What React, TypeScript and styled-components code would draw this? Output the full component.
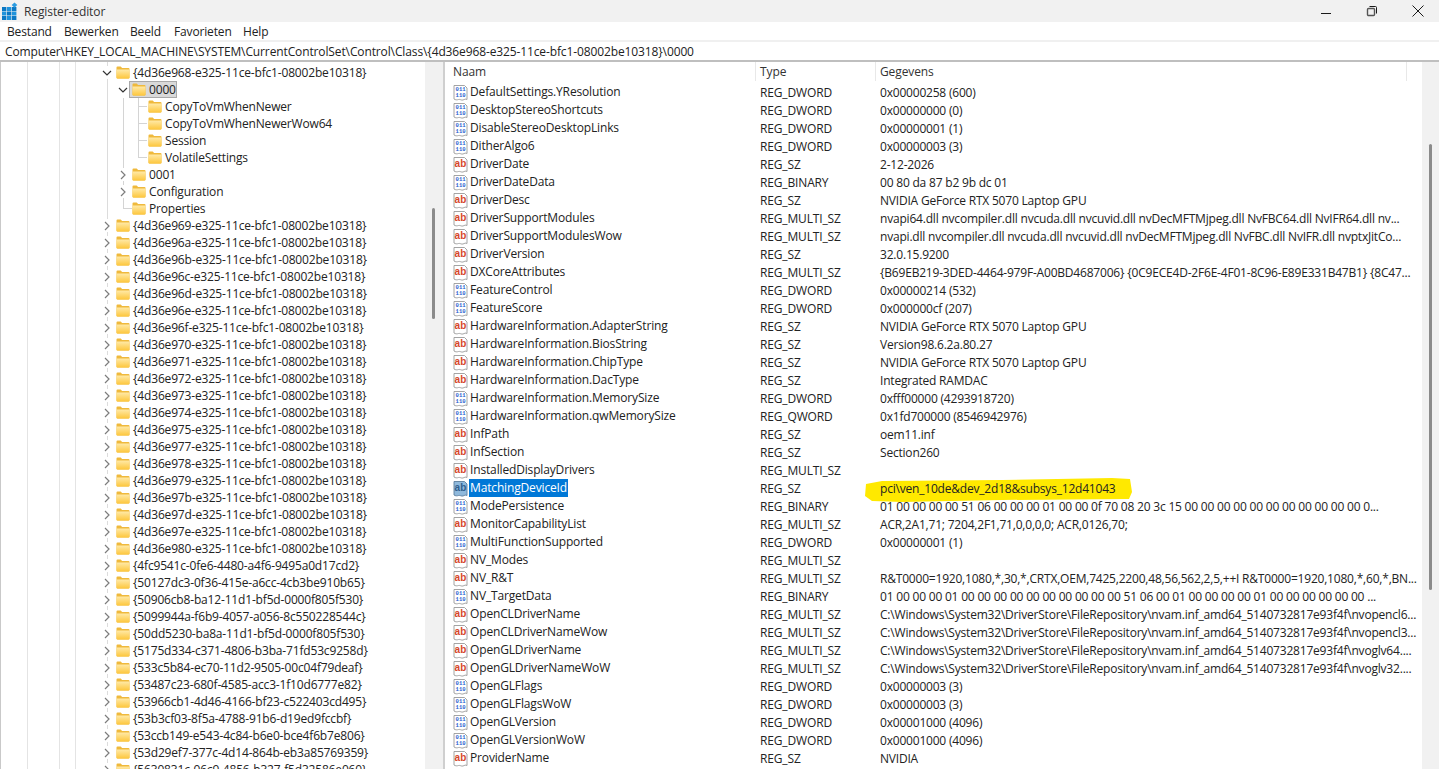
import React from "react";
import styled, { createGlobalStyle } from "styled-components";

const Global = createGlobalStyle`
  html, body { margin: 0; padding: 0; height: 100%; overflow: hidden; background: #fff; }
  #root { height: 100%; }
  * { box-sizing: border-box; }
`;

const FONT = `"Open Sans", "Noto Sans", "Liberation Sans", sans-serif`;

const Window = styled.div`
  height: 769px; width: 1439px; display: flex; flex-direction: column; overflow: hidden;
  font-family: ${FONT}; font-size: 12px; color: #1f1f1f; background: #fff;
`;
const TitleBar = styled.div`
  height: 22px; background: #f1f1f1; display: flex; align-items: center; padding-left: 1px; flex: none;
`;
const TitleText = styled.span`
  margin-left: 5px; color: #333; letter-spacing: -0.1px;
`;
const WindowButtons = styled.div`
  margin-left: auto; display: flex; gap: 30px; padding-right: 13px; align-items: center; height: 100%;
`;
const WindowButton = styled.svg`
  width: 16px; height: 16px; display: block; fill: none; stroke: #1a1a1a; stroke-width: 1;
`;
const MenuBar = styled.div`
  height: 20px; background: #fff; border-bottom: 2px solid #f0f0f0; display: flex; align-items: center; padding-left: 7px; flex: none;
`;
const MenuItem = styled.span<{ $w: number }>`
  width: ${(p) => p.$w}px; color: #222; letter-spacing: -0.15px;
`;
const AddressBar = styled.div`
  height: 20px; border-bottom: 2px solid #bfbfbf; display: flex; align-items: center; padding-left: 5px; flex: none;
  letter-spacing: -0.12px; color: #222;
`;
const Panes = styled.div`
  flex: 1; min-height: 0; display: flex;
`;
const TreePane = styled.div`
  width: 425px; flex: none; padding-top: 2px; overflow: hidden;
  background:
    linear-gradient(#c9c9c9, #c9c9c9) 0 0 / 1px 100% no-repeat,
    linear-gradient(#e4e4e4, #e4e4e4) 27px 0 / 1px 100% no-repeat,
    linear-gradient(#e4e4e4, #e4e4e4) 59px 0 / 1px 100% no-repeat,
    linear-gradient(#e4e4e4, #e4e4e4) 75px 0 / 1px 100% no-repeat,
    linear-gradient(#dcdcdc, #dcdcdc) 107px 0 / 1px 100% no-repeat;
`;
type Bg = { $guides?: number[]; $half?: number; $elbow?: [number, number] };
const rowBg = (p: Bg) => {
  const parts: string[] = [];
  (p.$guides || []).forEach((x) => parts.push(`linear-gradient(#d4d4d4,#d4d4d4) ${x}px 0 / 1px 100% no-repeat`));
  if (p.$half !== undefined) parts.push(`linear-gradient(#d4d4d4,#d4d4d4) ${p.$half}px 0 / 1px 9px no-repeat`);
  if (p.$elbow) parts.push(`linear-gradient(#d4d4d4,#d4d4d4) ${p.$elbow[0]}px 8px / ${p.$elbow[1]}px 1px no-repeat`);
  return parts.length ? parts.join(",") : "none";
};
const TreeRow = styled.div<{ $level: number } & Bg>`
  height: 17px; display: flex; align-items: center; white-space: nowrap;
  padding-left: ${(p) => 99 + (p.$level - 1) * 16}px;
  background: ${rowBg};
`;
const Chevron = styled.span`
  width: 16px; height: 13px; flex: none; background: #fff; display: flex; align-items: center; justify-content: center;
`;
const ChevronGap = styled.span`
  width: 16px; flex: none;
`;
const ChevronIcon = styled.svg<{ $open: boolean }>`
  width: 10px; height: 10px; display: block; fill: none;
  stroke: ${(p) => (p.$open ? "#333" : "#7d7d7d")}; stroke-width: 1.2;
`;
const Entry = styled.span<{ $selected?: boolean }>`
  height: 17px; display: flex; align-items: center; gap: 3px; margin-left: -2px; padding: 0 1px 0 3px;
  background: ${(p) => (p.$selected ? "#d9d9d9" : "transparent")};
  outline: ${(p) => (p.$selected ? "1px solid #a9a9a9" : "none")};
  outline-offset: -1px;
`;
const EntryLabel = styled.span`
  color: #222; letter-spacing: -0.17px;
`;
const FolderSvg = styled.svg`
  width: 14px; height: 13px; display: block; flex: none;
`;
const ScrollTrack = styled.div`
  width: 17px; flex: none; background: #f1f1f1; display: flex; justify-content: center;
`;
const LeftThumb = styled.div`
  width: 3px; height: 111px; margin-top: 146px; background: #8b8b8b; border-radius: 2px;
`;
const RightThumb = styled.div`
  width: 3px; height: 446px; margin-top: 82px; background: #8b8b8b; border-radius: 2px;
`;
const Splitter = styled.div`
  width: 6px; flex: none; background: #fff; border-left: 1px solid #f1f1f1; position: relative;
`;
const SplitterLine = styled.div`
  width: 2px; height: 100%; background: #cfcfcf;
`;
const ListPane = styled.div`
  flex: 1; min-width: 0; display: flex; flex-direction: column; overflow: hidden;
`;
const grid = `display: grid; grid-template-columns: 306px 120px 531px 18px; padding-left: 2px;`;
const ListHeader = styled.div`
  ${grid}; height: 21px; flex: none;
`;
const HeaderCell = styled.div`
  border-right: 1px solid #e8e8e8; padding-left: 3px; height: 19px; display: flex; align-items: center; color: #333; letter-spacing: -0.1px;
`;
const HeaderCellType = styled(HeaderCell)`
  padding-left: 4px;
`;
const ListRow = styled.div`
  ${grid}; height: 18px; flex: none; align-items: center; white-space: nowrap;
`;
const NameCell = styled.div`
  display: flex; align-items: center; padding-left: 3px; gap: 1px; height: 18px;
`;
const NameText = styled.span<{ $selected?: boolean }>`
  height: 18px; line-height: 18px; padding: 0 1px; letter-spacing: -0.15px;
  color: ${(p) => (p.$selected ? "#fff" : "#222")};
  background: ${(p) => (p.$selected ? "#0078d7" : "transparent")};
`;
const TypeCell = styled.div`
  padding-left: 4px; color: #222; letter-spacing: -0.15px;
`;
const DataCell = styled.div`
  padding-left: 4px; color: #222; letter-spacing: -0.2px; position: relative; overflow: visible;
`;
const DataText = styled.span`
  position: relative; z-index: 1;
`;
const Marker = styled.svg`
  position: absolute; left: -11px; top: -2px; width: 268px; height: 25px; display: block;
`;
const ValueSvg = styled.svg`
  width: 15px; height: 17px; display: block; flex: none;
`;
const AbText = styled.text`
  font-family: "Liberation Sans", sans-serif; font-size: 10px; font-weight: 700;
`;
const BinText = styled.text`
  font-family: "Liberation Mono", monospace; font-size: 5.6px; font-weight: 700;
`;

function AppIcon() {
  const cells: React.ReactNode[] = [];
  for (let r = 0; r < 3; r++)
    for (let c = 0; c < 3; c++)
      cells.push(
        <rect key={`${r}${c}`} x={1 + c * 5} y={6 + r * 4.5} width={4.4} height={4} fill={(r + c) % 2 ? "#1f93dc" : "#0b78c4"} />
      );
  return (
    <svg width="18" height="20" viewBox="0 0 18 20" style={{ flex: "none" }}>
      {cells}
      <path d="M13.5 1.5l2.8 2.6-2.8 2.7-2.8-2.7z" fill="#2b9be0" />
    </svg>
  );
}

function Folder() {
  return (
    <FolderSvg viewBox="0 0 14 13">
      <defs>
        <linearGradient id="fg" x1="0" y1="0" x2="0" y2="1">
          <stop offset="0" stopColor="#ffe9a6" />
          <stop offset="1" stopColor="#fdc63b" />
        </linearGradient>
      </defs>
      <path d="M0.5 1.5a1 1 0 0 1 1-1h3.2l1.4 1.6h6.4a1 1 0 0 1 1 1v8.4a1 1 0 0 1-1 1h-11a1 1 0 0 1-1-1z" fill="#efb93c" />
      <path d="M0.5 3.6h13v8a1 1 0 0 1-1 1h-11a1 1 0 0 1-1-1z" fill="url(#fg)" />
    </FolderSvg>
  );
}

function ChevronGlyph({ open }: { open: boolean }) {
  return (
    <ChevronIcon $open={open} viewBox="0 0 10 10">
      {open ? <path d="M1 3l4 4 4-4" /> : <path d="M3 1l4 4-4 4" />}
    </ChevronIcon>
  );
}

function ValueIcon({ kind, selected }: { kind: "ab" | "bin"; selected?: boolean }) {
  return (
    <ValueSvg viewBox="0 0 15 17">
      <path
        d="M1 1.5h10.5l2.5 2.5v11.5c-1.5-1-2.5 0-4 .5s-3-1-4.5-.5-3 .5-4.5-.5z"
        fill={selected ? "#8fb9dc" : "#fff"}
        stroke={selected ? "#5c7f9e" : "#9a9a9a"}
        strokeWidth="0.9"
      />
      {kind === "ab" ? (
        <AbText x="1.6" y="11" fill={selected ? "#2f5f8d" : "#d6472b"}>ab</AbText>
      ) : (
        <>
          <BinText x="2.6" y="7.4" fill="#2b5fd0">011</BinText>
          <BinText x="2.6" y="13" fill="#2b5fd0">110</BinText>
        </>
      )}
    </ValueSvg>
  );
}

type T = { label: string; level: number; chev?: "open" | "closed"; selected?: boolean } & Bg;
const suffix = "-e325-11ce-bfc1-08002be10318}";
const tree: T[] = [
  { label: "{4d36e968" + suffix, level: 1, chev: "open" },
  { label: "0000", level: 2, chev: "open", selected: true },
  { label: "CopyToVmWhenNewer", level: 3, $guides: [123, 138], $elbow: [138, 9] },
  { label: "CopyToVmWhenNewerWow64", level: 3, $guides: [123, 138], $elbow: [138, 9] },
  { label: "Session", level: 3, $guides: [123, 138], $elbow: [138, 9] },
  { label: "VolatileSettings", level: 3, $guides: [123], $half: 138, $elbow: [138, 9] },
  { label: "0001", level: 2, chev: "closed", $guides: [123] },
  { label: "Configuration", level: 2, chev: "closed", $guides: [123] },
  { label: "Properties", level: 2, $half: 123, $elbow: [123, 9] },
  ...["969", "96a", "96b", "96c", "96d", "96e", "96f", "970", "971", "972", "973", "974", "975", "977", "978", "979", "97b", "97d", "97e", "980"].map(
    (k): T => ({ label: `{4d36e${k}${suffix}`, level: 1, chev: "closed" })
  ),
  ...[
    "{4fc9541c-0fe6-4480-a4f6-9495a0d17cd2}",
    "{50127dc3-0f36-415e-a6cc-4cb3be910b65}",
    "{50906cb8-ba12-11d1-bf5d-0000f805f530}",
    "{5099944a-f6b9-4057-a056-8c550228544c}",
    "{50dd5230-ba8a-11d1-bf5d-0000f805f530}",
    "{5175d334-c371-4806-b3ba-71fd53c9258d}",
    "{533c5b84-ec70-11d2-9505-00c04f79deaf}",
    "{53487c23-680f-4585-acc3-1f10d6777e82}",
    "{53966cb1-4d46-4166-bf23-c522403cd495}",
    "{53b3cf03-8f5a-4788-91b6-d19ed9fccbf}",
    "{53ccb149-e543-4c84-b6e0-bce4f6b7e806}",
    "{53d29ef7-377c-4d14-864b-eb3a85769359}",
    "{5630831c-06c9-4856-b327-f5d32586e060}",
  ].map((label): T => ({ label, level: 1, chev: "closed" })),
];

const P = "C:\\Windows\\System32\\DriverStore\\FileRepository\\nvam.inf_amd64_5140732817e93f4f\\";
const GPU = "NVIDIA GeForce RTX 5070 Laptop GPU";
const values: [string, string, string, ("ab" | "bin")][] = [
  ["DefaultSettings.YResolution", "REG_DWORD", "0x00000258 (600)", "bin"],
  ["DesktopStereoShortcuts", "REG_DWORD", "0x00000000 (0)", "bin"],
  ["DisableStereoDesktopLinks", "REG_DWORD", "0x00000001 (1)", "bin"],
  ["DitherAlgo6", "REG_DWORD", "0x00000003 (3)", "bin"],
  ["DriverDate", "REG_SZ", "2-12-2026", "ab"],
  ["DriverDateData", "REG_BINARY", "00 80 da 87 b2 9b dc 01", "bin"],
  ["DriverDesc", "REG_SZ", GPU, "ab"],
  ["DriverSupportModules", "REG_MULTI_SZ", "nvapi64.dll nvcompiler.dll nvcuda.dll nvcuvid.dll nvDecMFTMjpeg.dll NvFBC64.dll NvIFR64.dll nv...", "ab"],
  ["DriverSupportModulesWow", "REG_MULTI_SZ", "nvapi.dll nvcompiler.dll nvcuda.dll nvcuvid.dll nvDecMFTMjpeg.dll NvFBC.dll NvIFR.dll nvptxJitCo...", "ab"],
  ["DriverVersion", "REG_SZ", "32.0.15.9200", "ab"],
  ["DXCoreAttributes", "REG_MULTI_SZ", "{B69EB219-3DED-4464-979F-A00BD4687006} {0C9ECE4D-2F6E-4F01-8C96-E89E331B47B1} {8C47...", "ab"],
  ["FeatureControl", "REG_DWORD", "0x00000214 (532)", "bin"],
  ["FeatureScore", "REG_DWORD", "0x000000cf (207)", "bin"],
  ["HardwareInformation.AdapterString", "REG_SZ", GPU, "ab"],
  ["HardwareInformation.BiosString", "REG_SZ", "Version98.6.2a.80.27", "ab"],
  ["HardwareInformation.ChipType", "REG_SZ", GPU, "ab"],
  ["HardwareInformation.DacType", "REG_SZ", "Integrated RAMDAC", "ab"],
  ["HardwareInformation.MemorySize", "REG_DWORD", "0xfff00000 (4293918720)", "bin"],
  ["HardwareInformation.qwMemorySize", "REG_QWORD", "0x1fd700000 (8546942976)", "bin"],
  ["InfPath", "REG_SZ", "oem11.inf", "ab"],
  ["InfSection", "REG_SZ", "Section260", "ab"],
  ["InstalledDisplayDrivers", "REG_MULTI_SZ", "", "ab"],
  ["MatchingDeviceId", "REG_SZ", "pci\\ven_10de&dev_2d18&subsys_12d41043", "ab"],
  ["ModePersistence", "REG_BINARY", "01 00 00 00 00 51 06 00 00 00 01 00 00 0f 70 08 20 3c 15 00 00 00 00 00 00 00 00 00 00 00 0...", "bin"],
  ["MonitorCapabilityList", "REG_MULTI_SZ", "ACR,2A1,71; 7204,2F1,71,0,0,0,0; ACR,0126,70;", "ab"],
  ["MultiFunctionSupported", "REG_DWORD", "0x00000001 (1)", "bin"],
  ["NV_Modes", "REG_MULTI_SZ", "", "ab"],
  ["NV_R&T", "REG_MULTI_SZ", "R&T0000=1920,1080,*,30,*,CRTX,OEM,7425,2200,48,56,562,2,5,++I R&T0000=1920,1080,*,60,*,BN...", "ab"],
  ["NV_TargetData", "REG_BINARY", "01 00 00 00 01 00 00 00 00 00 00 00 00 00 00 51 06 00 01 00 00 00 00 01 00 00 00 00 00 00 ...", "bin"],
  ["OpenCLDriverName", "REG_MULTI_SZ", P + "nvopencl6...", "ab"],
  ["OpenCLDriverNameWow", "REG_MULTI_SZ", P + "nvopencl3...", "ab"],
  ["OpenGLDriverName", "REG_MULTI_SZ", P + "nvoglv64....", "ab"],
  ["OpenGLDriverNameWoW", "REG_MULTI_SZ", P + "nvoglv32....", "ab"],
  ["OpenGLFlags", "REG_DWORD", "0x00000003 (3)", "bin"],
  ["OpenGLFlagsWoW", "REG_DWORD", "0x00000003 (3)", "bin"],
  ["OpenGLVersion", "REG_DWORD", "0x00001000 (4096)", "bin"],
  ["OpenGLVersionWoW", "REG_DWORD", "0x00001000 (4096)", "bin"],
  ["ProviderName", "REG_SZ", "NVIDIA", "ab"],
];

export default function App() {
  return (
    <Window>
      <Global />
      <TitleBar>
        <AppIcon />
        <TitleText>Register-editor</TitleText>
        <WindowButtons>
          <WindowButton viewBox="0 0 16 16"><path d="M3 10.5h10" /></WindowButton>
          <WindowButton viewBox="0 0 16 16">
            <rect x="3.5" y="5.5" width="7" height="7" rx="1" strokeWidth="1.4" stroke="#555" />
            <path d="M5.5 3.5h6a1 1 0 0 1 1 1v6" />
          </WindowButton>
          <WindowButton viewBox="0 0 16 16"><path d="M2.5 2.5l11 11M13.5 2.5l-11 11" /></WindowButton>
        </WindowButtons>
      </TitleBar>
      <MenuBar>
        <MenuItem $w={57}>Bestand</MenuItem>
        <MenuItem $w={66}>Bewerken</MenuItem>
        <MenuItem $w={44}>Beeld</MenuItem>
        <MenuItem $w={69}>Favorieten</MenuItem>
        <MenuItem $w={30}>Help</MenuItem>
      </MenuBar>
      <AddressBar>{"Computer\\HKEY_LOCAL_MACHINE\\SYSTEM\\CurrentControlSet\\Control\\Class\\{4d36e968-e325-11ce-bfc1-08002be10318}\\0000"}</AddressBar>
      <Panes>
        <TreePane>
          {tree.map((t, i) => (
            <TreeRow key={i} $level={t.level} $guides={t.$guides} $half={t.$half} $elbow={t.$elbow}>
              {t.chev ? <Chevron><ChevronGlyph open={t.chev === "open"} /></Chevron> : <ChevronGap />}
              <Entry $selected={t.selected}>
                <Folder />
                <EntryLabel>{t.label}</EntryLabel>
              </Entry>
            </TreeRow>
          ))}
        </TreePane>
        <ScrollTrack><LeftThumb /></ScrollTrack>
        <Splitter><SplitterLine /></Splitter>
        <ListPane>
          <ListHeader>
            <HeaderCell>Naam</HeaderCell>
            <HeaderCellType>Type</HeaderCellType>
            <HeaderCellType>Gegevens</HeaderCellType>
          </ListHeader>
          {values.map(([name, type, data, kind]) => {
            const selected = name === "MatchingDeviceId";
            return (
              <ListRow key={name}>
                <NameCell>
                  <ValueIcon kind={kind} selected={selected} />
                  <NameText $selected={selected}>{name}</NameText>
                </NameCell>
                <TypeCell>{type}</TypeCell>
                <DataCell>
                  {selected && (
                    <Marker viewBox="0 0 268 25">
                      <path d="M1 6L17 3 137 2 247 0 265 1 267 14 264 21 137 22 37 24 7 23 0 18z" fill="#ffe900" />
                    </Marker>
                  )}
                  <DataText>{data}</DataText>
                </DataCell>
              </ListRow>
            );
          })}
        </ListPane>
        <ScrollTrack><RightThumb /></ScrollTrack>
      </Panes>
    </Window>
  );
}
